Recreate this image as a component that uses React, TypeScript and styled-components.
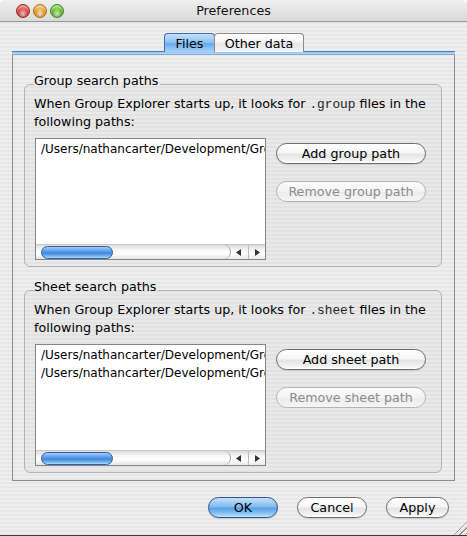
import React from "react";
import styled, { createGlobalStyle, css } from "styled-components";

const Global = createGlobalStyle`
  html, body { margin: 0; padding: 0; background: #ffffff; }
  body { font-family: "DejaVu Sans", "Lucida Grande", sans-serif; font-size: 12.7px; }
  * { box-sizing: border-box; }
`;

const Window = styled.div`
  width: 467px;
  height: 536px;
  display: flex;
  flex-direction: column;
  position: relative;
  overflow: hidden;
  border-radius: 5px 5px 0 0;
  border-bottom: 1px solid #3c3c3c;
  background: repeating-linear-gradient(to bottom, #eeeeee 0px, #eeeeee 2px, #e7e7e7 2px, #e7e7e7 4px);
  color: #000;
`;

const TitleBar = styled.div`
  height: 22px;
  flex: none;
  display: flex;
  align-items: center;
  position: relative;
  padding-left: 16px;
  background: linear-gradient(to bottom, #efefef 0%, #e4e4e4 50%, #d9d9d9 100%);
  border-bottom: 1px solid #979797;
`;

const Lights = styled.div`
  display: flex;
  gap: 3px;
`;

const Light = styled.div<{ $c: string; $d: string }>`
  width: 14px;
  height: 14px;
  border-radius: 50%;
  border: 1px solid ${(p) => p.$d};
  background: radial-gradient(circle at 50% 75%, #ffffffaa 0%, transparent 45%),
    radial-gradient(circle at 50% 30%, ${(p) => p.$c} 0%, ${(p) => p.$d} 100%);
  box-shadow: inset 0 2px 2px rgba(255, 255, 255, 0.5);
`;

const Title = styled.div`
  position: absolute;
  left: 0;
  right: 0;
  top: 0;
  bottom: 0;
  display: flex;
  align-items: center;
  justify-content: center;
  font-size: 12.7px;
  color: #111;
  pointer-events: none;
`;

const Body = styled.div`
  flex: 1;
  display: flex;
  flex-direction: column;
  padding-top: 11px;
`;

const TabRow = styled.div`
  display: flex;
  justify-content: center;
  height: 18px;
  position: relative;
  z-index: 1;
  margin-left: 1px;
`;

const Tab = styled.div<{ $active?: boolean }>`
  height: 19px;
  display: flex;
  align-items: center;
  justify-content: center;
  border-radius: 4px 4px 0 0;
  border: 1px solid #8a8a8a;
  border-bottom: none;
  ${(p) =>
    p.$active
      ? css`
          width: 51px;
          border-color: #3f6db5;
          background: linear-gradient(to bottom, #c4e0fb 0%, #8fc2f2 45%, #6aaaea 55%, #a9d6fb 100%);
        `
      : css`
          width: 90px;
          margin-left: -1px;
          background: linear-gradient(to bottom, #ffffff 0%, #f4f4f4 45%, #e6e6e6 55%, #f6f6f6 100%);
        `}
`;

const Pane = styled.div`
  margin: 0 12px;
  display: flex;
  flex-direction: column;
  border: 1px solid #8c8c8c;
  border-top: none;
`;

const PaneBar = styled.div`
  height: 4px;
  margin: 0 -1px;
  border-top: 1px solid #4f7fc4;
  border-bottom: 1px solid #8aa7cf;
  background: linear-gradient(to bottom, #8ec0f2, #b8d9f8);
`;

const PaneContent = styled.div`
  display: flex;
  flex-direction: column;
  gap: 12px;
  padding: 18px 12px 7px 11px;
`;

const GroupBox = styled.fieldset`
  margin: 0;
  padding: 0 9px 6px 9px;
  border: 1px solid #b3b3b3;
  border-radius: 6px;
  background: rgba(0, 0, 0, 0.018);
  min-width: 0;
`;

const Legend = styled.legend`
  padding: 0 2px 6px 0;
  margin-left: 0;
  line-height: 16px;
`;

const Desc = styled.div`
  line-height: 18px;
  height: 36px;
`;

const Mono = styled.span`
  font-family: "Liberation Mono", "Courier New", monospace;
  font-size: 12.8px;
  line-height: 0;
  color: #222;
`;

const Row = styled.div`
  display: flex;
  gap: 10px;
  margin-top: 7px;
`;

const ListBox = styled.div`
  width: 231px;
  height: 122px;
  margin-left: 1px;
  border: 1px solid #858585;
  background: #fff;
  display: flex;
  flex-direction: column;
`;

const Items = styled.div`
  flex: 1;
  padding: 1px 0 0 5px;
  overflow: hidden;
`;

const Item = styled.div`
  line-height: 18px;
  font-size: 12px;
  white-space: nowrap;
  overflow: hidden;
`;

const ScrollBar = styled.div`
  height: 15px;
  flex: none;
  display: flex;
  background: linear-gradient(to bottom, #d8d8d8 0%, #f4f4f4 30%, #ffffff 60%, #eaeaea 100%);
  border-top: 1px solid #c8c8c8;
`;

const Track = styled.div`
  flex: 1;
  display: flex;
  align-items: center;
  padding-left: 5px;
  border-right: 1px solid #a0a0a0;
  border-radius: 0 7px 7px 0;
  background: linear-gradient(to bottom, #dcdcdc 0%, #f7f7f7 35%, #ffffff 60%, #e4e4e4 100%);
`;

const Thumb = styled.div`
  width: 72px;
  height: 13px;
  border-radius: 7px;
  border: 1px solid #2d5ea8;
  background: linear-gradient(to bottom, #a6cdf5 0%, #5a9ce6 40%, #3f86dc 55%, #7ab9f2 85%, #b4dcfb 100%);
`;

const Arrows = styled.div`
  width: 34px;
  display: flex;
  align-items: center;
`;

const Arrow = styled.div<{ $sep?: boolean }>`
  flex: 1;
  height: 100%;
  display: flex;
  align-items: center;
  justify-content: center;
  ${(p) => p.$sep && css`border-left: 1px solid #bdbdbd;`}
`;

const ButtonCol = styled.div<{ $top: number }>`
  display: flex;
  flex-direction: column;
  gap: 17px;
  padding-top: ${(p) => p.$top}px;
`;

const AquaButton = styled.div<{ $w: number; $disabled?: boolean; $primary?: boolean }>`
  width: ${(p) => p.$w}px;
  height: 21px;
  border-radius: 11px;
  display: flex;
  align-items: center;
  justify-content: center;
  border: 1px solid #6e6e6e;
  background: linear-gradient(to bottom, #ffffff 0%, #f6f6f6 45%, #e4e4e4 55%, #f2f2f2 85%, #ffffff 100%);
  box-shadow: 0 1px 1px rgba(0, 0, 0, 0.12);
  ${(p) =>
    p.$disabled &&
    css`
      color: #8c8c8c;
      border-color: #b4b4b4;
      background: linear-gradient(to bottom, #fbfbfb 0%, #f3f3f3 50%, #ececec 55%, #f5f5f5 100%);
      box-shadow: none;
    `}
  ${(p) =>
    p.$primary &&
    css`
      border-color: #2f4f86;
      background: linear-gradient(to bottom, #c5e1fb 0%, #84bbef 45%, #5b9fe6 55%, #8fcaf7 85%, #c1e6fd 100%);
    `}
`;

const Footer = styled.div`
  display: flex;
  justify-content: flex-end;
  gap: 19px;
  padding: 16px 18px 0 0;
`;

const Grip = styled.div`
  position: absolute;
  right: 0;
  bottom: 0;
  width: 14px;
  height: 14px;
  background: repeating-linear-gradient(135deg, transparent 0px, transparent 2px, #9a9a9a 2px, #9a9a9a 3px, #ffffff 3px, #ffffff 4px);
  clip-path: polygon(100% 0, 100% 100%, 0 100%);
`;

const LeftArrow = () => (
  <svg width="6" height="7" viewBox="0 0 6 7">
    <polygon points="5,0 5,7 0,3.5" fill="#333" />
  </svg>
);
const RightArrow = () => (
  <svg width="6" height="7" viewBox="0 0 6 7">
    <polygon points="1,0 1,7 6,3.5" fill="#333" />
  </svg>
);

const Scroller = () => (
  <ScrollBar>
    <Track>
      <Thumb />
    </Track>
    <Arrows>
      <Arrow>
        <LeftArrow />
      </Arrow>
      <Arrow $sep>
        <RightArrow />
      </Arrow>
    </Arrows>
  </ScrollBar>
);

const PathGroup = ({
  title,
  ext,
  items,
  addLabel,
  removeLabel,
}: {
  title: string;
  ext: string;
  items: string[];
  addLabel: string;
  removeLabel: string;
}) => (
  <GroupBox>
    <Legend>{title}</Legend>
    <Desc>
      When Group Explorer starts up, it looks for <Mono>{ext}</Mono> files in the following paths:
    </Desc>
    <Row>
      <ListBox>
        <Items>
          {items.map((it, i) => (
            <Item key={i}>{it}</Item>
          ))}
        </Items>
        <Scroller />
      </ListBox>
      <ButtonCol $top={5}>
        <AquaButton $w={150}>{addLabel}</AquaButton>
        <AquaButton $w={150} $disabled>
          {removeLabel}
        </AquaButton>
      </ButtonCol>
    </Row>
  </GroupBox>
);

export default function App() {
  return (
    <>
      <Global />
      <Window>
        <TitleBar>
          <Lights>
            <Light $c="#f26b63" $d="#a3201b" />
            <Light $c="#fcc25a" $d="#b86a10" />
            <Light $c="#8bd957" $d="#3d8a1c" />
          </Lights>
          <Title>Preferences</Title>
        </TitleBar>
        <Body>
          <TabRow>
            <Tab $active>Files</Tab>
            <Tab>Other data</Tab>
          </TabRow>
          <Pane>
            <PaneBar />
            <PaneContent>
              <PathGroup
                title="Group search paths"
                ext=".group"
                items={["/Users/nathancarter/Development/Group Explorer/groups"]}
                addLabel="Add group path"
                removeLabel="Remove group path"
              />
              <PathGroup
                title="Sheet search paths"
                ext=".sheet"
                items={[
                  "/Users/nathancarter/Development/Group Explorer/sheets",
                  "/Users/nathancarter/Development/Group Explorer/sheets2",
                ]}
                addLabel="Add sheet path"
                removeLabel="Remove sheet path"
              />
            </PaneContent>
          </Pane>
          <Footer>
            <AquaButton $w={70} $primary>
              OK
            </AquaButton>
            <AquaButton $w={70}>Cancel</AquaButton>
            <AquaButton $w={63}>Apply</AquaButton>
          </Footer>
        </Body>
        <Grip />
      </Window>
    </>
  );
}
